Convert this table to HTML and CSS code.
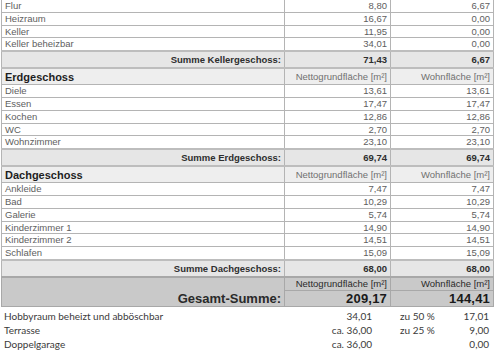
FILE: index.html
```html
<!DOCTYPE html>
<html lang="de">
<head>
<meta charset="utf-8">
<title>Flächenberechnung</title>
<link rel="stylesheet" href="styles.css">
</head>
<body>
<div class="sheet">
<table class="areas">
  <colgroup><col class="c-name"><col class="c-ngf"><col class="c-wf"></colgroup>
  <tbody>
    <tr class="row first"><td>Flur</td><td class="num">8,80</td><td class="num">6,67</td></tr>
    <tr class="row"><td>Heizraum</td><td class="num">16,67</td><td class="num">0,00</td></tr>
    <tr class="row"><td>Keller</td><td class="num">11,95</td><td class="num">0,00</td></tr>
    <tr class="row"><td>Keller beheizbar</td><td class="num">34,01</td><td class="num">0,00</td></tr>
    <tr class="sum"><td class="num">Summe Kellergeschoss:</td><td class="num">71,43</td><td class="num">6,67</td></tr>

    <tr class="head"><td class="floor">Erdgeschoss</td><td class="num">Nettogrundfläche [m²]</td><td class="num">Wohnfläche [m²]</td></tr>
    <tr class="row"><td>Diele</td><td class="num">13,61</td><td class="num">13,61</td></tr>
    <tr class="row"><td>Essen</td><td class="num">17,47</td><td class="num">17,47</td></tr>
    <tr class="row"><td>Kochen</td><td class="num">12,86</td><td class="num">12,86</td></tr>
    <tr class="row"><td>WC</td><td class="num">2,70</td><td class="num">2,70</td></tr>
    <tr class="row"><td>Wohnzimmer</td><td class="num">23,10</td><td class="num">23,10</td></tr>
    <tr class="sum"><td class="num">Summe Erdgeschoss:</td><td class="num">69,74</td><td class="num">69,74</td></tr>

    <tr class="head"><td class="floor">Dachgeschoss</td><td class="num">Nettogrundfläche [m²]</td><td class="num">Wohnfläche [m²]</td></tr>
    <tr class="row"><td>Ankleide</td><td class="num">7,47</td><td class="num">7,47</td></tr>
    <tr class="row"><td>Bad</td><td class="num">10,29</td><td class="num">10,29</td></tr>
    <tr class="row"><td>Galerie</td><td class="num">5,74</td><td class="num">5,74</td></tr>
    <tr class="row"><td>Kinderzimmer 1</td><td class="num">14,90</td><td class="num">14,90</td></tr>
    <tr class="row"><td>Kinderzimmer 2</td><td class="num">14,51</td><td class="num">14,51</td></tr>
    <tr class="row"><td>Schlafen</td><td class="num">15,09</td><td class="num">15,09</td></tr>
    <tr class="sum"><td class="num">Summe Dachgeschoss:</td><td class="num">68,00</td><td class="num">68,00</td></tr>

    <tr class="total-head"><td class="total-label num" rowspan="2">Gesamt-Summe:</td><td class="num">Nettogrundfläche [m²]</td><td class="num">Wohnfläche [m²]</td></tr>
    <tr class="total"><td class="num">209,17</td><td class="num">144,41</td></tr>
  </tbody>
</table>

<div class="extras">
  <div>Hobbyraum beheizt und abböschbar</div><div class="v">34,01</div><div class="z">zu 50 %</div><div class="v">17,01</div>
  <div>Terrasse</div><div class="v">ca. 36,00</div><div class="z">zu 25 %</div><div class="v">9,00</div>
  <div>Doppelgarage</div><div class="v">ca. 36,00</div><div class="z"></div><div class="v">0,00</div>
</div>
</div>
</body>
</html>
```
FILE: styles.css
```css
html, body {
  margin: 0;
  padding: 0;
  background: #ffffff;
}

.sheet {
  width: 494px;
  padding: 0 1px;
  box-sizing: border-box;
}

.areas {
  width: 492px;
  border-collapse: collapse;
  table-layout: fixed;
  font-family: "Liberation Sans", Arial, sans-serif;
  font-size: 9.5px;
  color: #5e5e5e;
}

.c-name { width: 283px; }
.c-ngf { width: 106px; }
.c-wf { width: 103px; }

.areas td {
  border: 1px solid #b4b4b4;
  padding: 0 3px;
  white-space: nowrap;
  overflow: hidden;
}

.areas .num { text-align: right; }

.row td {
  height: 11.8px;
  line-height: 11.8px;
}

.row.first td { border-top: none; }

.sum td {
  height: 15px;
  line-height: 15px;
  background: #e6e6e6;
  font-weight: bold;
  color: #2e2e2e;
  border-top: 2px solid #bdbdbd;
}

.head td {
  height: 14px;
  line-height: 14px;
  background: #eeeeee;
  color: #707070;
  border-top: 2px solid #bdbdbd;
}

.head .floor {
  font-size: 11px;
  font-weight: bold;
  color: #1e1e1e;
  padding-top: 1px;
}

.total-head td,
.total td {
  background: #c9c9c9;
  border-color: #a8a8a8;
}

.total-head td {
  height: 12px;
  line-height: 12px;
  color: #2a2a2a;
  border-top: 2px solid #a8a8a8;
}

.total-label {
  font-size: 13px;
  font-weight: bold;
  color: #1a1a1a;
  vertical-align: bottom;
  padding-bottom: 1px !important;
}

.total td {
  height: 15px;
  line-height: 15px;
  font-size: 13px;
  font-weight: bold;
  color: #1a1a1a;
  letter-spacing: 0.2px;
}

.extras {
  display: grid;
  grid-template-columns: 1fr 80px 68px 49px;
  padding: 2px 4px 0 3px;
  font-family: Lato, "Open Sans", sans-serif;
  font-size: 10px;
  line-height: 14px;
  color: #3a3a3a;
}

.extras .v { text-align: right; }
.extras .z { padding-left: 28px; }
```
